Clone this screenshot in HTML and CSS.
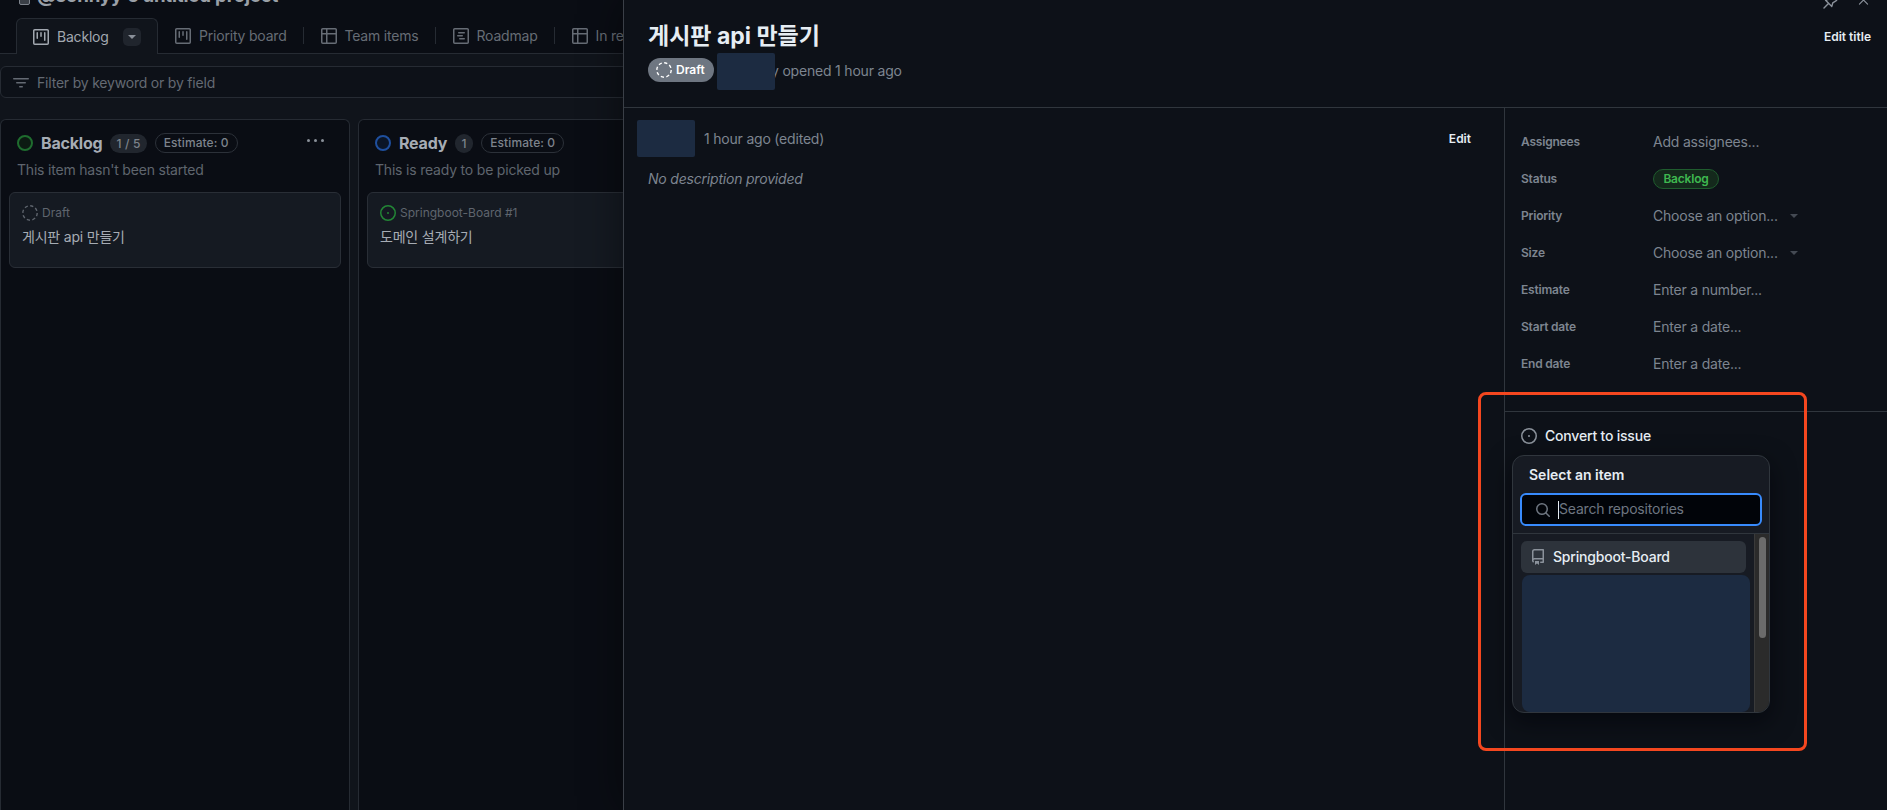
FILE: index.html
```html
<!DOCTYPE html>
<html lang="ko">
<head>
<meta charset="utf-8">
<title>Springboot-Board project</title>
<link rel="stylesheet" href="styles.css">
</head>
<body>
<svg class="defs" aria-hidden="true">
  <symbol id="i-board" viewBox="0 0 16 16"><path d="M1.75 0h12.5C15.216 0 16 .784 16 1.75v12.5A1.75 1.75 0 0 1 14.25 16H1.75A1.75 1.75 0 0 1 0 14.25V1.75C0 .784.784 0 1.75 0ZM1.5 1.75v12.5c0 .138.112.25.25.25h12.5a.25.25 0 0 0 .25-.25V1.75a.25.25 0 0 0-.25-.25H1.75a.25.25 0 0 0-.25.25ZM11.75 3a.75.75 0 0 1 .75.75v7.5a.75.75 0 0 1-1.5 0v-7.5a.75.75 0 0 1 .75-.75Zm-8.25.75a.75.75 0 0 1 1.5 0v5.5a.75.75 0 0 1-1.5 0ZM8 3a.75.75 0 0 1 .75.75v3.5a.75.75 0 0 1-1.5 0v-3.5A.75.75 0 0 1 8 3Z"/></symbol>
  <symbol id="i-table" viewBox="0 0 16 16"><path d="M0 1.75C0 .784.784 0 1.75 0h12.5C15.216 0 16 .784 16 1.75v12.5A1.75 1.75 0 0 1 14.25 16H1.75A1.75 1.75 0 0 1 0 14.25ZM6.5 6.5v8h7.75a.25.25 0 0 0 .25-.25V6.5Zm8-1.5V1.75a.25.25 0 0 0-.25-.25H6.5V5Zm-13 1.5v7.75c0 .138.112.25.25.25H5v-8ZM5 5V1.5H1.75a.25.25 0 0 0-.25.25V5Z"/></symbol>
  <symbol id="i-roadmap" viewBox="0 0 16 16"><path d="M4.75 7a.75.75 0 0 0 0 1.5h4.5a.75.75 0 0 0 0-1.5h-4.5ZM5 4.75A.75.75 0 0 1 5.75 4h5.5a.75.75 0 0 1 0 1.5h-5.5A.75.75 0 0 1 5 4.75ZM6.75 10a.75.75 0 0 0 0 1.5h4.5a.75.75 0 0 0 0-1.5h-4.5Z"/><path d="M0 1.75C0 .784.784 0 1.75 0h12.5C15.216 0 16 .784 16 1.75v12.5A1.75 1.75 0 0 1 14.25 16H1.75A1.75 1.75 0 0 1 0 14.25Zm1.75-.25a.25.25 0 0 0-.25.25v12.5c0 .138.112.25.25.25h12.5a.25.25 0 0 0 .25-.25V1.75a.25.25 0 0 0-.25-.25Z"/></symbol>
  <symbol id="i-filter" viewBox="0 0 16 16"><path d="M.75 3h14.5a.75.75 0 0 1 0 1.5H.75a.75.75 0 0 1 0-1.5ZM3 7.75A.75.75 0 0 1 3.75 7h8.5a.75.75 0 0 1 0 1.5h-8.5A.75.75 0 0 1 3 7.75Zm3 4a.75.75 0 0 1 .75-.75h2.5a.75.75 0 0 1 0 1.5h-2.5a.75.75 0 0 1-.75-.75Z"/></symbol>
  <symbol id="i-search" viewBox="0 0 16 16"><path d="M10.68 11.74a6 6 0 0 1-7.922-8.982 6 6 0 0 1 8.982 7.922l3.04 3.04a.749.749 0 0 1-.326 1.275.749.749 0 0 1-.734-.215ZM11.5 7a4.499 4.499 0 1 0-8.997 0A4.499 4.499 0 0 0 11.5 7Z"/></symbol>
  <symbol id="i-repo" viewBox="0 0 16 16"><path d="M2 2.5A2.5 2.5 0 0 1 4.5 0h8.75a.75.75 0 0 1 .75.75v12.5a.75.75 0 0 1-.75.75h-2.5a.75.75 0 0 1 0-1.5h1.75v-2h-8a1 1 0 0 0-.714 1.7.75.75 0 1 1-1.072 1.05A2.495 2.495 0 0 1 2 11.5Zm10.5-1h-8a1 1 0 0 0-1 1v6.708A2.486 2.486 0 0 1 4.5 9h8ZM5 12.25a.25.25 0 0 1 .25-.25h3.5a.25.25 0 0 1 .25.25v3.25a.25.25 0 0 1-.4.2l-1.45-1.087a.249.249 0 0 0-.3 0L5.4 15.7a.25.25 0 0 1-.4-.2Z"/></symbol>
  <symbol id="i-issue" viewBox="0 0 16 16"><circle cx="8" cy="8" r="1"/><path d="M8 0a8 8 0 1 1 0 16A8 8 0 0 1 8 0ZM1.5 8a6.5 6.5 0 1 0 13 0 6.5 6.5 0 0 0-13 0Z"/></symbol>
  <symbol id="i-draft" viewBox="0 0 16 16"><circle cx="8" cy="8" r="7.2" fill="none" stroke="currentColor" stroke-width="1.4" stroke-dasharray="3.2 2.45"/></symbol>
</svg>

<div class="board">
  <div class="project-title">
    <span class="title-box"></span>
    <span>@sohnyy's untitled project</span>
  </div>

  <nav class="tabs">
    <div class="tab tab-active">
      <svg class="icon"><use href="#i-board"/></svg>
      <span>Backlog</span>
      <span class="tab-menu"><span class="caret"></span></span>
    </div>
    <div class="tab tab-first">
      <svg class="icon"><use href="#i-board"/></svg>
      <span>Priority board</span>
    </div>
    <div class="tab">
      <svg class="icon"><use href="#i-table"/></svg>
      <span>Team items</span>
    </div>
    <div class="tab">
      <svg class="icon"><use href="#i-roadmap"/></svg>
      <span>Roadmap</span>
    </div>
    <div class="tab">
      <svg class="icon"><use href="#i-table"/></svg>
      <span>In review</span>
    </div>
  </nav>

  <div class="filter">
    <svg class="icon"><use href="#i-filter"/></svg>
    <span>Filter by keyword or by field</span>
  </div>

  <div class="columns">
    <section class="column">
      <header class="column-head">
        <span class="status-ring ring-green"></span>
        <h2 class="column-title">Backlog</h2>
        <span class="count">1 / 5</span>
        <span class="estimate">Estimate: 0</span>
        <span class="more"><i></i><i></i><i></i></span>
      </header>
      <p class="column-desc">This item hasn't been started</p>
      <article class="card">
        <div class="card-meta">
          <svg class="icon icon-draft"><use href="#i-draft"/></svg>
          <span>Draft</span>
        </div>
        <div class="card-title">게시판 api 만들기</div>
      </article>
    </section>
    <section class="column">
      <header class="column-head">
        <span class="status-ring ring-blue"></span>
        <h2 class="column-title">Ready</h2>
        <span class="count">1</span>
        <span class="estimate">Estimate: 0</span>
      </header>
      <p class="column-desc">This is ready to be picked up</p>
      <article class="card">
        <div class="card-meta">
          <svg class="icon icon-issue"><use href="#i-issue"/></svg>
          <span>Springboot-Board #1</span>
        </div>
        <div class="card-title">도메인 설계하기</div>
      </article>
    </section>
  </div>
</div>

<aside class="panel">
  <div class="panel-actions">
    <svg class="action-icon" viewBox="0 0 16 16"><path d="M1 15l4.2-4.2M2.6 7.2l6.2 6.2 1-3.6 3.8-2.4M2.6 7.2l3.6-1 2.4-3.8"/></svg>
    <svg class="action-icon action-close" viewBox="0 0 16 16"><path d="M3 3l10 10M13 3L3 13"/></svg>
  </div>

  <header class="panel-head">
    <div>
      <h1 class="panel-title">게시판 api 만들기</h1>
      <div class="panel-meta">
        <span class="draft-pill">
          <svg class="icon"><use href="#i-draft"/></svg>
          Draft
        </span>
        <span class="redact redact-author"></span>
        <span class="opened">y opened 1 hour ago</span>
      </div>
    </div>
    <button class="link-btn edit-title">Edit title</button>
  </header>

  <div class="panel-body">
    <main class="comment">
      <div class="comment-head">
        <span class="redact"></span>
        <span class="comment-time">1 hour ago (edited)</span>
        <button class="link-btn comment-edit">Edit</button>
      </div>
      <p class="no-desc">No description provided</p>
    </main>

    <div class="sidebar">
      <dl class="fields">
        <dt>Assignees</dt><dd>Add assignees...</dd>
        <dt>Status</dt><dd><span class="status-pill">Backlog</span></dd>
        <dt>Priority</dt><dd>Choose an option...<span class="caret caret-field"></span></dd>
        <dt>Size</dt><dd>Choose an option...<span class="caret caret-field"></span></dd>
        <dt>Estimate</dt><dd>Enter a number...</dd>
        <dt>Start date</dt><dd>Enter a date...</dd>
        <dt>End date</dt><dd>Enter a date...</dd>
      </dl>

      <div class="convert">
        <div class="convert-row">
          <svg class="icon"><use href="#i-issue"/></svg>
          <span>Convert to issue</span>
        </div>

        <div class="popover">
          <div class="popover-head">
            <div class="popover-title">Select an item</div>
            <div class="search">
              <svg class="icon"><use href="#i-search"/></svg>
              <span class="text-cursor"></span>
              <span class="search-text">Search repositories</span>
            </div>
          </div>
          <div class="popover-list">
            <div class="list-items">
              <div class="repo-item">
                <svg class="icon"><use href="#i-repo"/></svg>
                <span>Springboot-Board</span>
              </div>
              <div class="redact redact-list"></div>
            </div>
            <div class="scrollbar"><div class="scroll-thumb"></div></div>
          </div>
        </div>
      </div>
    </div>
  </div>
</aside>

<div class="annotation"></div>
</body>
</html>
```
FILE: styles.css
```css
* { box-sizing: border-box; }

html, body {
  margin: 0;
  height: 100%;
  overflow: hidden;
}

body {
  background: #10141b;
  color: #e6edf3;
  font-family: Inter, "Noto Sans CJK KR", "Noto Sans", sans-serif;
  font-size: 14px;
  line-height: 20px;
  letter-spacing: -0.2px;
}

.defs { display: none; }

.icon {
  width: 16px;
  height: 16px;
  flex: none;
  fill: currentColor;
}

/* Board behind the panel */
.board {
  height: 100%;
  width: 623px;
  overflow: hidden;
  background: #10141b;
}

.project-title {
  height: 18px;
  background: #0a0d14;
  padding: 0 0 7px 19px;
  display: flex;
  align-items: flex-end;
  gap: 7px;
  font-size: 18.7px;
  font-weight: 700;
  line-height: 30px;
  white-space: nowrap;
  color: #9aa0a8;
}

.title-box {
  width: 11px;
  height: 11px;
  margin-bottom: 6px;
  border: 1px solid #7d838c;
  border-radius: 2px;
  background: #3a3f47;
  flex: none;
}

.tabs {
  height: 36px;
  padding-left: 16px;
  background: #0a0d14;
  border-bottom: 1px solid #262b33;
  display: flex;
  color: #666c75;
}

.tab {
  height: 35px;
  flex: none;
  display: flex;
  align-items: center;
  gap: 8px;
  padding: 0 17px;
  white-space: nowrap;
  position: relative;
}

.tab:not(.tab-active):not(:last-child)::after {
  content: "";
  position: absolute;
  right: 0;
  top: 9px;
  bottom: 9px;
  width: 1px;
  background: #262b33;
}

.tab-first { padding-left: 17px; }

.tab-active {
  width: 142px;
  height: 36px;
  padding: 0 16px;
  color: #a2a8b0;
  background: #10141b;
  border: 1px solid #262b33;
  border-bottom: 0;
  border-radius: 6px 6px 0 0;
}

.tab-menu {
  width: 18px;
  height: 18px;
  margin-left: 6px;
  border-radius: 5px;
  background: #20252d;
  display: flex;
  align-items: center;
  justify-content: center;
}

.caret {
  width: 0;
  height: 0;
  border: 4px solid transparent;
  border-top-color: #8a9099;
  border-bottom: 0;
}

.filter {
  width: 800px;
  height: 32px;
  margin-top: 12px;
  padding-top: 1px;
  border: 1px solid #262b33;
  border-radius: 6px;
  background: #0d1118;
  display: flex;
  align-items: center;
  gap: 8px;
  padding-left: 12px;
  color: #646a73;
}

.columns {
  margin-top: 21px;
  display: flex;
  gap: 8px;
  height: 692px;
}

.column {
  width: 350px;
  flex: none;
  background: #0a0d14;
  border: 1px solid #262b33;
  border-bottom: 0;
  border-radius: 6px 6px 0 0;
  padding: 12px 8px 0;
}

.column-head {
  height: 22px;
  padding-left: 8px;
  padding-right: 17px;
  display: flex;
  align-items: center;
  gap: 8px;
}

.status-ring {
  width: 16px;
  height: 16px;
  border-radius: 50%;
  border: 2px solid;
  flex: none;
}

.ring-green { border-color: #1f6d2f; background: #0c1a12; }
.ring-blue { border-color: #1f4f9e; background: #0b1526; }

.column-title {
  margin: 0;
  font-size: 16px;
  font-weight: 700;
  line-height: 22px;
  color: #a6acb4;
}

.count {
  height: 19px;
  min-width: 18px;
  padding: 0 6px;
  border-radius: 10px;
  background: #21262e;
  font-size: 12px;
  font-weight: 500;
  line-height: 19px;
  letter-spacing: 0.2px;
  text-align: center;
  color: #7d838c;
}

.estimate {
  height: 20px;
  padding: 0 8px;
  border: 1px solid #2c3139;
  border-radius: 10px;
  font-size: 12px;
  font-weight: 500;
  line-height: 18px;
  letter-spacing: 0.1px;
  white-space: nowrap;
  color: #7d838c;
}

.more {
  margin-left: auto;
  margin-bottom: 6px;
  display: flex;
  gap: 4px;
}

.more i {
  width: 3px;
  height: 3px;
  border-radius: 50%;
  background: #8a9099;
}

.column-desc {
  margin: 6px 0 12px;
  padding-left: 8px;
  height: 20px;
  color: #5f656e;
}

.card {
  height: 76px;
  width: 332px;
  padding: 11px 12px;
  background: #151a22;
  border: 1px solid #292e36;
  border-radius: 6px;
}

.card-meta {
  height: 18px;
  display: flex;
  align-items: center;
  gap: 4px;
  font-size: 12px;
  letter-spacing: 0;
  white-space: nowrap;
  color: #5f656e;
}

.icon-draft { color: #5f656e; }
.icon-issue { color: #238636; }

.card-title {
  margin-top: 5px;
  white-space: nowrap;
  color: #a6acb4;
}

/* Item side panel */
.panel {
  position: absolute;
  top: 0;
  bottom: 0;
  left: 623px;
  right: 0;
  background: #0d1118;
  border-left: 1px solid #3a3f47;
  box-shadow: 0 0 40px rgba(0, 0, 0, .45);
  display: flex;
  flex-direction: column;
}

.panel-actions {
  position: absolute;
  top: -7px;
  right: 17px;
  display: flex;
  gap: 18px;
}

.action-icon {
  width: 16px;
  height: 16px;
  fill: none;
  stroke: #8b929b;
  stroke-width: 1.4;
  stroke-linecap: round;
  stroke-linejoin: round;
}

.action-close {
  width: 13px;
  height: 14px;
}

.panel-head {
  height: 108px;
  flex: none;
  padding: 20px 16px 0 24px;
  border-bottom: 1px solid #30363d;
  display: flex;
  justify-content: space-between;
  align-items: flex-start;
}

.panel-title {
  margin: 0;
  font-size: 23px;
  font-weight: 700;
  line-height: 32px;
  letter-spacing: 0;
  color: #e6edf3;
}

.panel-meta {
  margin-top: 1px;
  display: flex;
  align-items: center;
}

.draft-pill {
  width: 66px;
  height: 24px;
  margin-bottom: 3px;
  padding-left: 8px;
  border-radius: 12px;
  background: #6e7681;
  color: #fff;
  font-size: 12px;
  font-weight: 600;
  letter-spacing: 0;
  display: flex;
  align-items: center;
  gap: 4px;
}

.redact {
  background: #1c2b41;
  border-radius: 2px;
  flex: none;
}

.redact-author {
  width: 58px;
  height: 37px;
  margin-left: 3px;
  position: relative;
  z-index: 1;
}

.opened {
  margin-left: -4px;
  margin-top: -1px;
  color: #7d8590;
}

.link-btn {
  padding: 0;
  border: 0;
  background: none;
  font: inherit;
  font-size: 12px;
  font-weight: 600;
  color: #e6edf3;
}

.edit-title {
  margin-top: 7px;
}

.panel-body {
  flex: 1;
  display: flex;
  min-height: 0;
}

.comment {
  flex: 1;
  padding: 12px 33px 0 13px;
}

.comment-head {
  display: flex;
  align-items: center;
  gap: 9px;
}

.comment-head .redact {
  width: 58px;
  height: 37px;
}

.comment-time { color: #7d8590; }

.comment-edit { margin-left: auto; }

.no-desc {
  margin: 12px 0 0 11px;
  font-style: italic;
  color: #7d8590;
}

.sidebar {
  width: 383px;
  flex: none;
  border-left: 1px solid #30363d;
  position: relative;
}

.fields {
  margin: 0;
  padding: 15px 0 29px 16px;
  display: grid;
  grid-template-columns: 132px 1fr;
  grid-auto-rows: 37px;
  align-items: center;
  border-bottom: 1px solid #30363d;
}

.fields dt {
  font-size: 12px;
  font-weight: 600;
  color: #7d8590;
}

.fields dd {
  margin: 0;
  color: #7d8590;
  display: flex;
  align-items: center;
}

.status-pill {
  width: 66px;
  height: 20px;
  border-radius: 10px;
  border: 1px solid #1f5c2e;
  background: #14291c;
  color: #3fb950;
  font-size: 12px;
  font-weight: 600;
  line-height: 18px;
  text-align: center;
}

.caret-field {
  margin-left: 12px;
  border-top-color: #444a53;
}

.convert {
  position: relative;
  padding-top: 12px;
}

.convert-row {
  height: 24px;
  margin-left: 16px;
  display: flex;
  align-items: center;
  gap: 8px;
  font-weight: 500;
}

.convert-row .icon { color: #8b929b; }

.popover {
  position: absolute;
  left: 7px;
  top: 43px;
  width: 258px;
  height: 258px;
  background: #171b23;
  border: 1px solid #30363d;
  border-radius: 12px;
  box-shadow: 0 8px 24px rgba(1, 4, 9, .6);
  overflow: hidden;
  display: flex;
  flex-direction: column;
}

.popover-head {
  height: 78px;
  flex: none;
  padding: 9px 7px 0;
  border-bottom: 1px solid #30363d;
}

.popover-title {
  padding-left: 9px;
  font-weight: 600;
  letter-spacing: 0;
  color: #e6edf3;
}

.search {
  height: 33px;
  margin-top: 8px;
  padding-left: 13px;
  border: 2px solid #388bfd;
  border-radius: 6px;
  background: #010409;
  color: #6e7681;
  display: flex;
  align-items: center;
}

.search-text { margin-top: -2px; }

.text-cursor {
  width: 1px;
  height: 18px;
  margin: 0 0 0 7px;
  background: #e6edf3;
}

.popover-list {
  flex: 1;
  display: flex;
  min-height: 0;
}

.list-items {
  flex: 1;
  padding: 7px 0 0 8px;
  min-width: 0;
}

.repo-item {
  width: 225px;
  height: 32px;
  padding-left: 9px;
  border-radius: 6px;
  background: #2d333b;
  display: flex;
  align-items: center;
  gap: 7px;
  font-weight: 500;
  color: #e6edf3;
}

.repo-item .icon { color: #8b929b; }

.redact-list {
  width: 228px;
  height: 137px;
  margin: 2px 0 0 1px;
  border-radius: 8px;
}

.scrollbar {
  width: 15px;
  flex: none;
  padding: 3px 3px 0 4px;
  background: #2b2b2b;
  border-left: 1px solid #3a3a3a;
}

.scroll-thumb {
  height: 101px;
  border-radius: 4px;
  background: #6b6b6b;
}

/* Hand-drawn highlight over the screenshot */
.annotation {
  position: absolute;
  left: 1478px;
  top: 392px;
  width: 329px;
  height: 359px;
  border: 3px solid #f4471f;
  border-radius: 8px;
  pointer-events: none;
}
```
